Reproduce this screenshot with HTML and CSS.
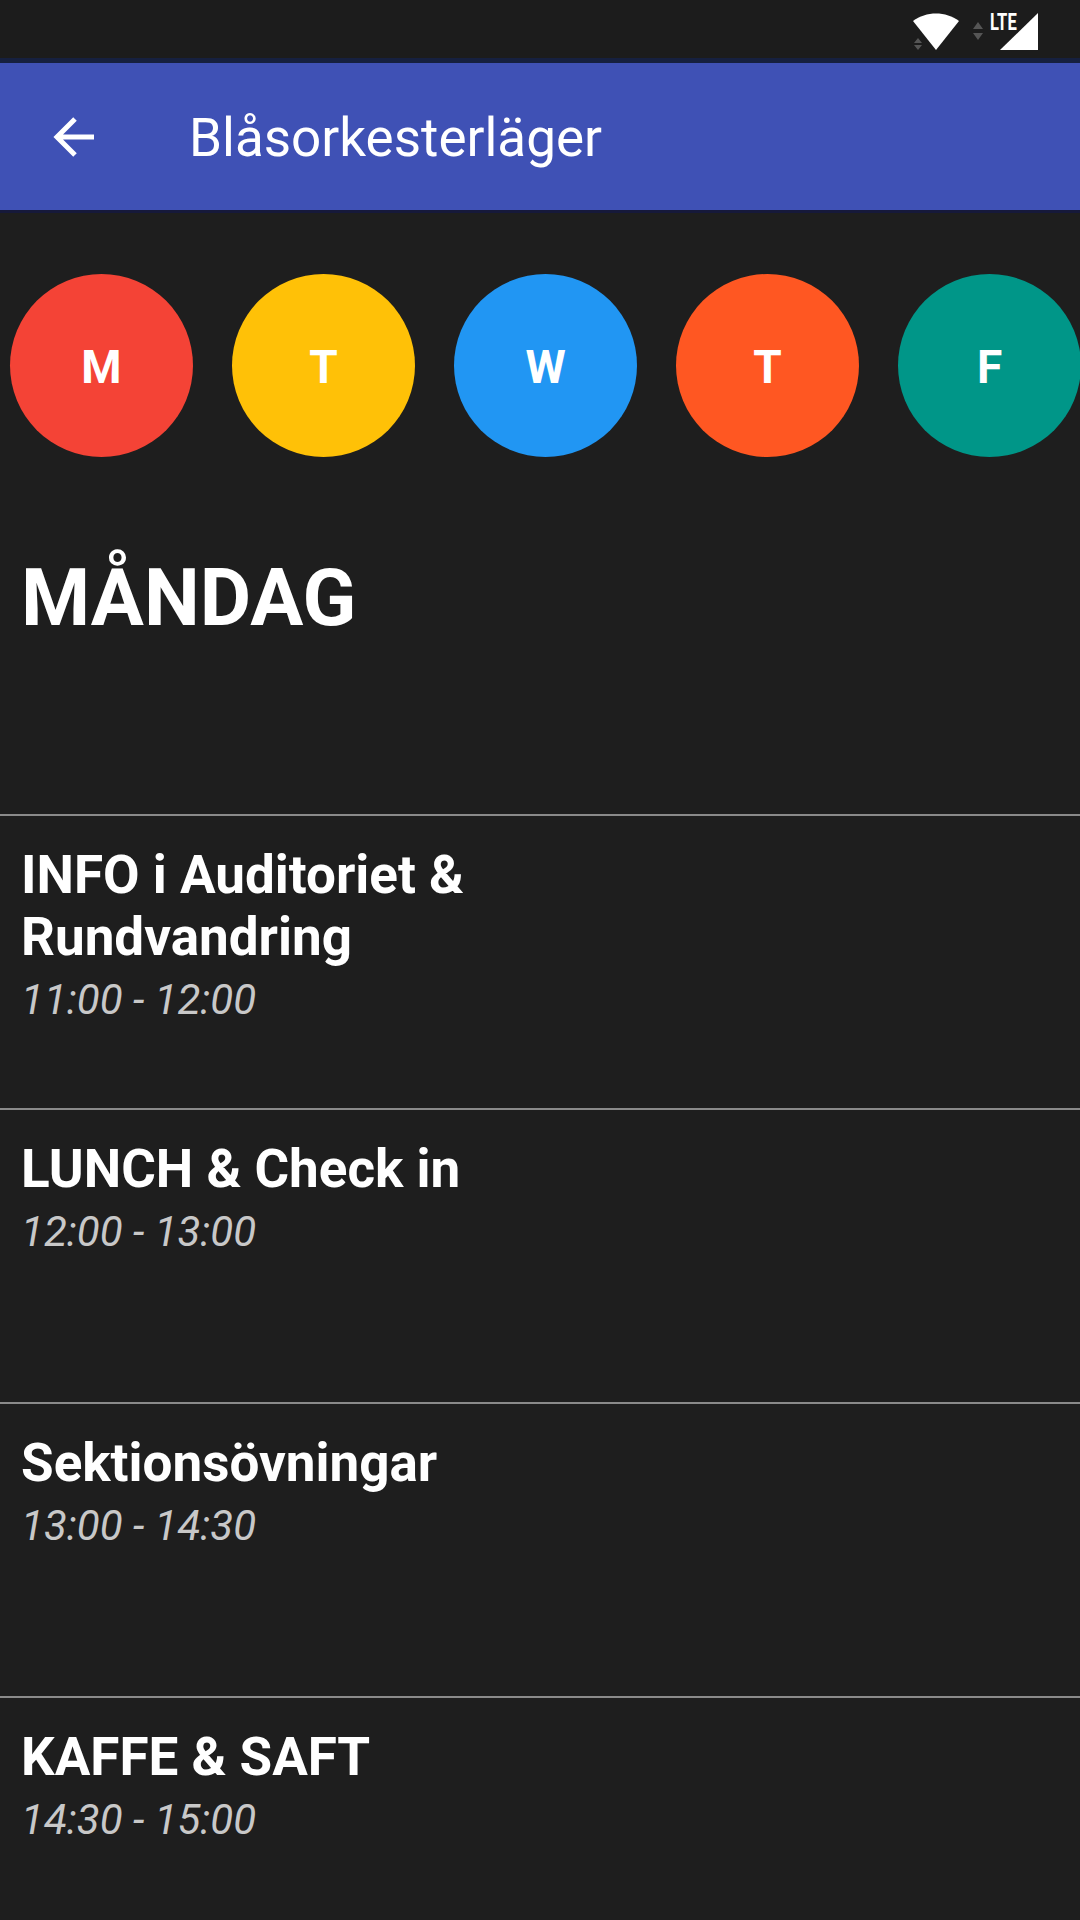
FILE: index.html
```html
<!DOCTYPE html>
<html lang="sv">
<head>
<meta charset="utf-8">
<title>Blåsorkesterläger</title>
<link rel="stylesheet" href="styles.css">
</head>
<body>
<div class="status">
  <svg class="status-icons" width="200" height="58" viewBox="0 0 200 58">
    <path class="solid" d="M33 21 C46 11 66 11 79 21 L56 50 Z"/>
    <path class="dim" d="M34 43 l4 -5 l4 5 Z M34 45 l4 5 l4 -5 Z M93 29 l5 -7 l5 7 Z M93 33 l5 7 l5 -7 Z"/>
    <path class="solid" d="M120 50 L158 13 L158 50 Z"/>
  </svg>
  <span class="lte">LTE</span>
</div>
<header class="appbar">
  <svg class="back" width="46" height="46" viewBox="0 0 46 46">
    <path d="M43 23 H6 M24 5 L6 23 L24 41" fill="none" stroke="#fff" stroke-width="5"/>
  </svg>
  <h1 class="appbar-title">Blåsorkesterläger</h1>
</header>
<main>
  <nav class="days">
    <div class="day day-red">M</div>
    <div class="day day-amber">T</div>
    <div class="day day-blue">W</div>
    <div class="day day-orange">T</div>
    <div class="day day-teal">F</div>
  </nav>
  <h2 class="heading">MÅNDAG</h2>
  <ul class="list">
    <li class="item"><div class="item-title">INFO i Auditoriet &amp;<br>Rundvandring</div><div class="item-time">11:00 - 12:00</div></li>
    <li class="item"><div class="item-title">LUNCH &amp; Check in</div><div class="item-time">12:00 - 13:00</div></li>
    <li class="item"><div class="item-title">Sektionsövningar</div><div class="item-time">13:00 - 14:30</div></li>
    <li class="item"><div class="item-title">KAFFE &amp; SAFT</div><div class="item-time">14:30 - 15:00</div></li>
  </ul>
</main>
</body>
</html>
```
FILE: styles.css
```css
* { box-sizing: border-box; }
html, body { margin: 0; padding: 0; }
body {
  width: 1080px;
  height: 1920px;
  overflow: hidden;
  background: #1e1e1e;
  color: #fff;
  font-family: Roboto, "Liberation Sans", sans-serif;
}
.status {
  height: 58px;
  background: #1c1c1c;
  position: relative;
  display: flex;
  justify-content: flex-end;
}
.status-icons { flex: none; }
.solid { fill: #fff; }
.dim { fill: #555; }
.lte {
  position: absolute;
  left: 990px;
  top: 10px;
  font: 700 23px/26px Roboto, sans-serif;
  transform: scaleX(.72);
  transform-origin: left top;
}
.appbar {
  height: 152px;
  border-top: 5px solid #16203f;
  background: #3f51b5;
  display: flex;
  align-items: center;
  padding-left: 51px;
  gap: 92px;
  box-shadow: 0 3px 0 #16193a;
}
.back { flex: none; }
.appbar-title {
  margin: 0;
  padding-top: 3px;
  font-size: 53px;
  font-weight: 400;
  line-height: 60px;
}
.days {
  display: flex;
  gap: 39px;
  padding: 64px 0 0 10px;
}
.day {
  flex: none;
  width: 183px;
  height: 183px;
  padding-top: 2px;
  border-radius: 50%;
  display: flex;
  align-items: center;
  justify-content: center;
  font-size: 46px;
  font-weight: 700;
}
.day-red { background: #f44336; }
.day-amber { background: #ffc107; }
.day-blue { background: #2196f3; }
.day-orange { background: #ff5722; }
.day-teal { background: #009688; }
.heading {
  margin: 0;
  padding: 96px 0 0 21px;
  height: 357px;
  font-size: 79px;
  line-height: 90px;
  font-weight: 700;
}
.list { list-style: none; margin: 0; padding: 0; }
.item {
  height: 294px;
  border-top: 2px solid #8a8a8a;
  padding: 28px 21px 0;
}
.item-title {
  font-size: 53px;
  font-weight: 700;
  line-height: 62px;
}
.item-time {
  font-size: 42px;
  font-weight: 400;
  font-style: italic;
  color: #c8c8c8;
  line-height: 63px;
}
```
